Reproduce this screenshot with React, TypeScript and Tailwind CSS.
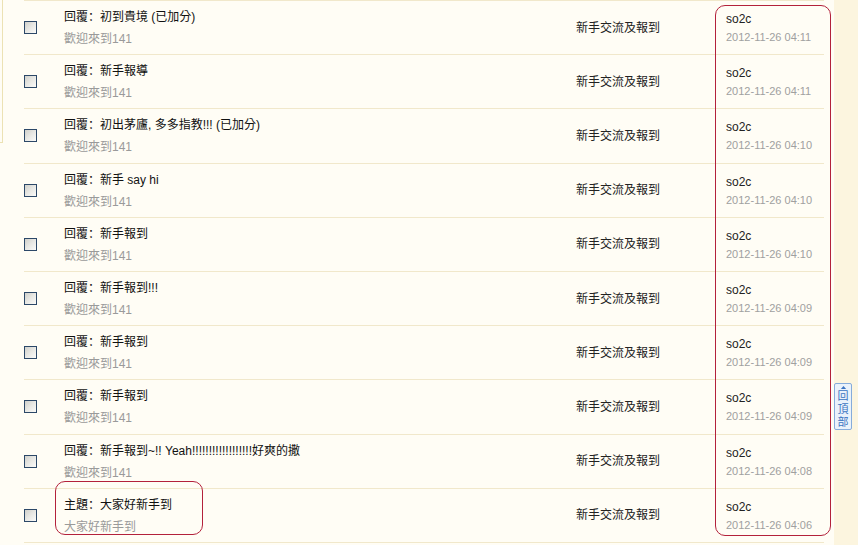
import React from "react";

type Row = {
  prefix: string;
  title: string;
  summary: string;
  time: string;
};

const ROWS: Row[] = [
  { prefix: "回覆", title: "初到貴境 (已加分)", summary: "歡迎來到141", time: "2012-11-26 04:11" },
  { prefix: "回覆", title: "新手報導", summary: "歡迎來到141", time: "2012-11-26 04:11" },
  { prefix: "回覆", title: "初出茅廬, 多多指教!!! (已加分)", summary: "歡迎來到141", time: "2012-11-26 04:10" },
  { prefix: "回覆", title: "新手 say hi", summary: "歡迎來到141", time: "2012-11-26 04:10" },
  { prefix: "回覆", title: "新手報到", summary: "歡迎來到141", time: "2012-11-26 04:10" },
  { prefix: "回覆", title: "新手報到!!!", summary: "歡迎來到141", time: "2012-11-26 04:09" },
  { prefix: "回覆", title: "新手報到", summary: "歡迎來到141", time: "2012-11-26 04:09" },
  { prefix: "回覆", title: "新手報到", summary: "歡迎來到141", time: "2012-11-26 04:09" },
  { prefix: "回覆", title: "新手報到~!! Yeah!!!!!!!!!!!!!!!!!!好爽的撒", summary: "歡迎來到141", time: "2012-11-26 04:08" },
  { prefix: "主題", title: "大家好新手到", summary: "大家好新手到", time: "2012-11-26 04:06" },
];

const FONT = { fontFamily: '"Liberation Sans", "Noto Sans CJK TC", sans-serif' };
// left-set full-width colon, as the original page shows it
const COLON = { fontFamily: '"Noto Sans CJK SC", sans-serif' };

function Checkbox() {
  return (
    <div className="w-[13px] h-[13px] border border-[#2c4868] bg-gradient-to-br from-[#d0d0cb] via-[#e8e8e4] to-[#fbfbf9]" />
  );
}

export default function App() {
  return (
    <div
      className="relative w-[858px] h-[545px] overflow-hidden bg-[#fffdf5] flex text-[12px]"
      style={FONT}
    >
      {/* left gutter with the corner of the panel behind */}
      <div className="w-[24px] shrink-0">
        <div className="w-[3px] h-[143px] border-r border-b border-[#ece2b4]" />
      </div>

      {/* message list */}
      <div className="w-[800px] shrink-0 border-t border-[#f1e8cb]">
        {ROWS.map((row, i) => (
          <div key={i} className="flex h-[54.2px] border-b border-[#f1e8cb]">
            <div className="w-[40px] shrink-0 flex items-center">
              <Checkbox />
            </div>
            <div className="w-[512px] shrink-0 pt-[4px] leading-[22px]">
              <div className="text-[#111]">
                {row.prefix}
                <span style={COLON}>：</span>
                {row.title}
              </div>
              <div className="text-[#9a9a9a]">{row.summary}</div>
            </div>
            <div className="w-[139px] shrink-0 flex items-center text-[#222]">
              新手交流及報到
            </div>
            <div className="flex-1 pl-[11px] pt-[9px] leading-[18px]">
              <div className="text-[#222]">so2c</div>
              <div className="text-[11px] text-[#a0a0a0]">{row.time}</div>
            </div>
          </div>
        ))}
      </div>

      <div className="w-[10px] shrink-0" />

      {/* right strip with back-to-top */}
      <div className="w-[24px] shrink-0 bg-[#fcf5df] pt-[383px]">
        <button className="w-[18px] h-[47px] flex flex-col items-center pt-[2px] border border-[#86acdb] rounded-[2px] bg-[#eaf2fb] text-[#3b74c2] text-[11px] leading-[13px]">
          <svg width="7" height="4" viewBox="0 0 7 4" className="mb-[1px]">
            <path d="M3.5 0 L7 4 L0 4 Z" fill="#3b74c2" />
          </svg>
          <span>回</span>
          <span>頂</span>
          <span>部</span>
        </button>
      </div>

      {/* annotation outlines */}
      <div className="absolute left-[715px] top-[5px] w-[116px] h-[531px] border-[1.5px] border-[#b3213b] rounded-[10px] pointer-events-none" />
      <div className="absolute left-[55px] top-[481px] w-[148px] h-[54px] border-[1.5px] border-[#b3213b] rounded-[10px] pointer-events-none" />
    </div>
  );
}
